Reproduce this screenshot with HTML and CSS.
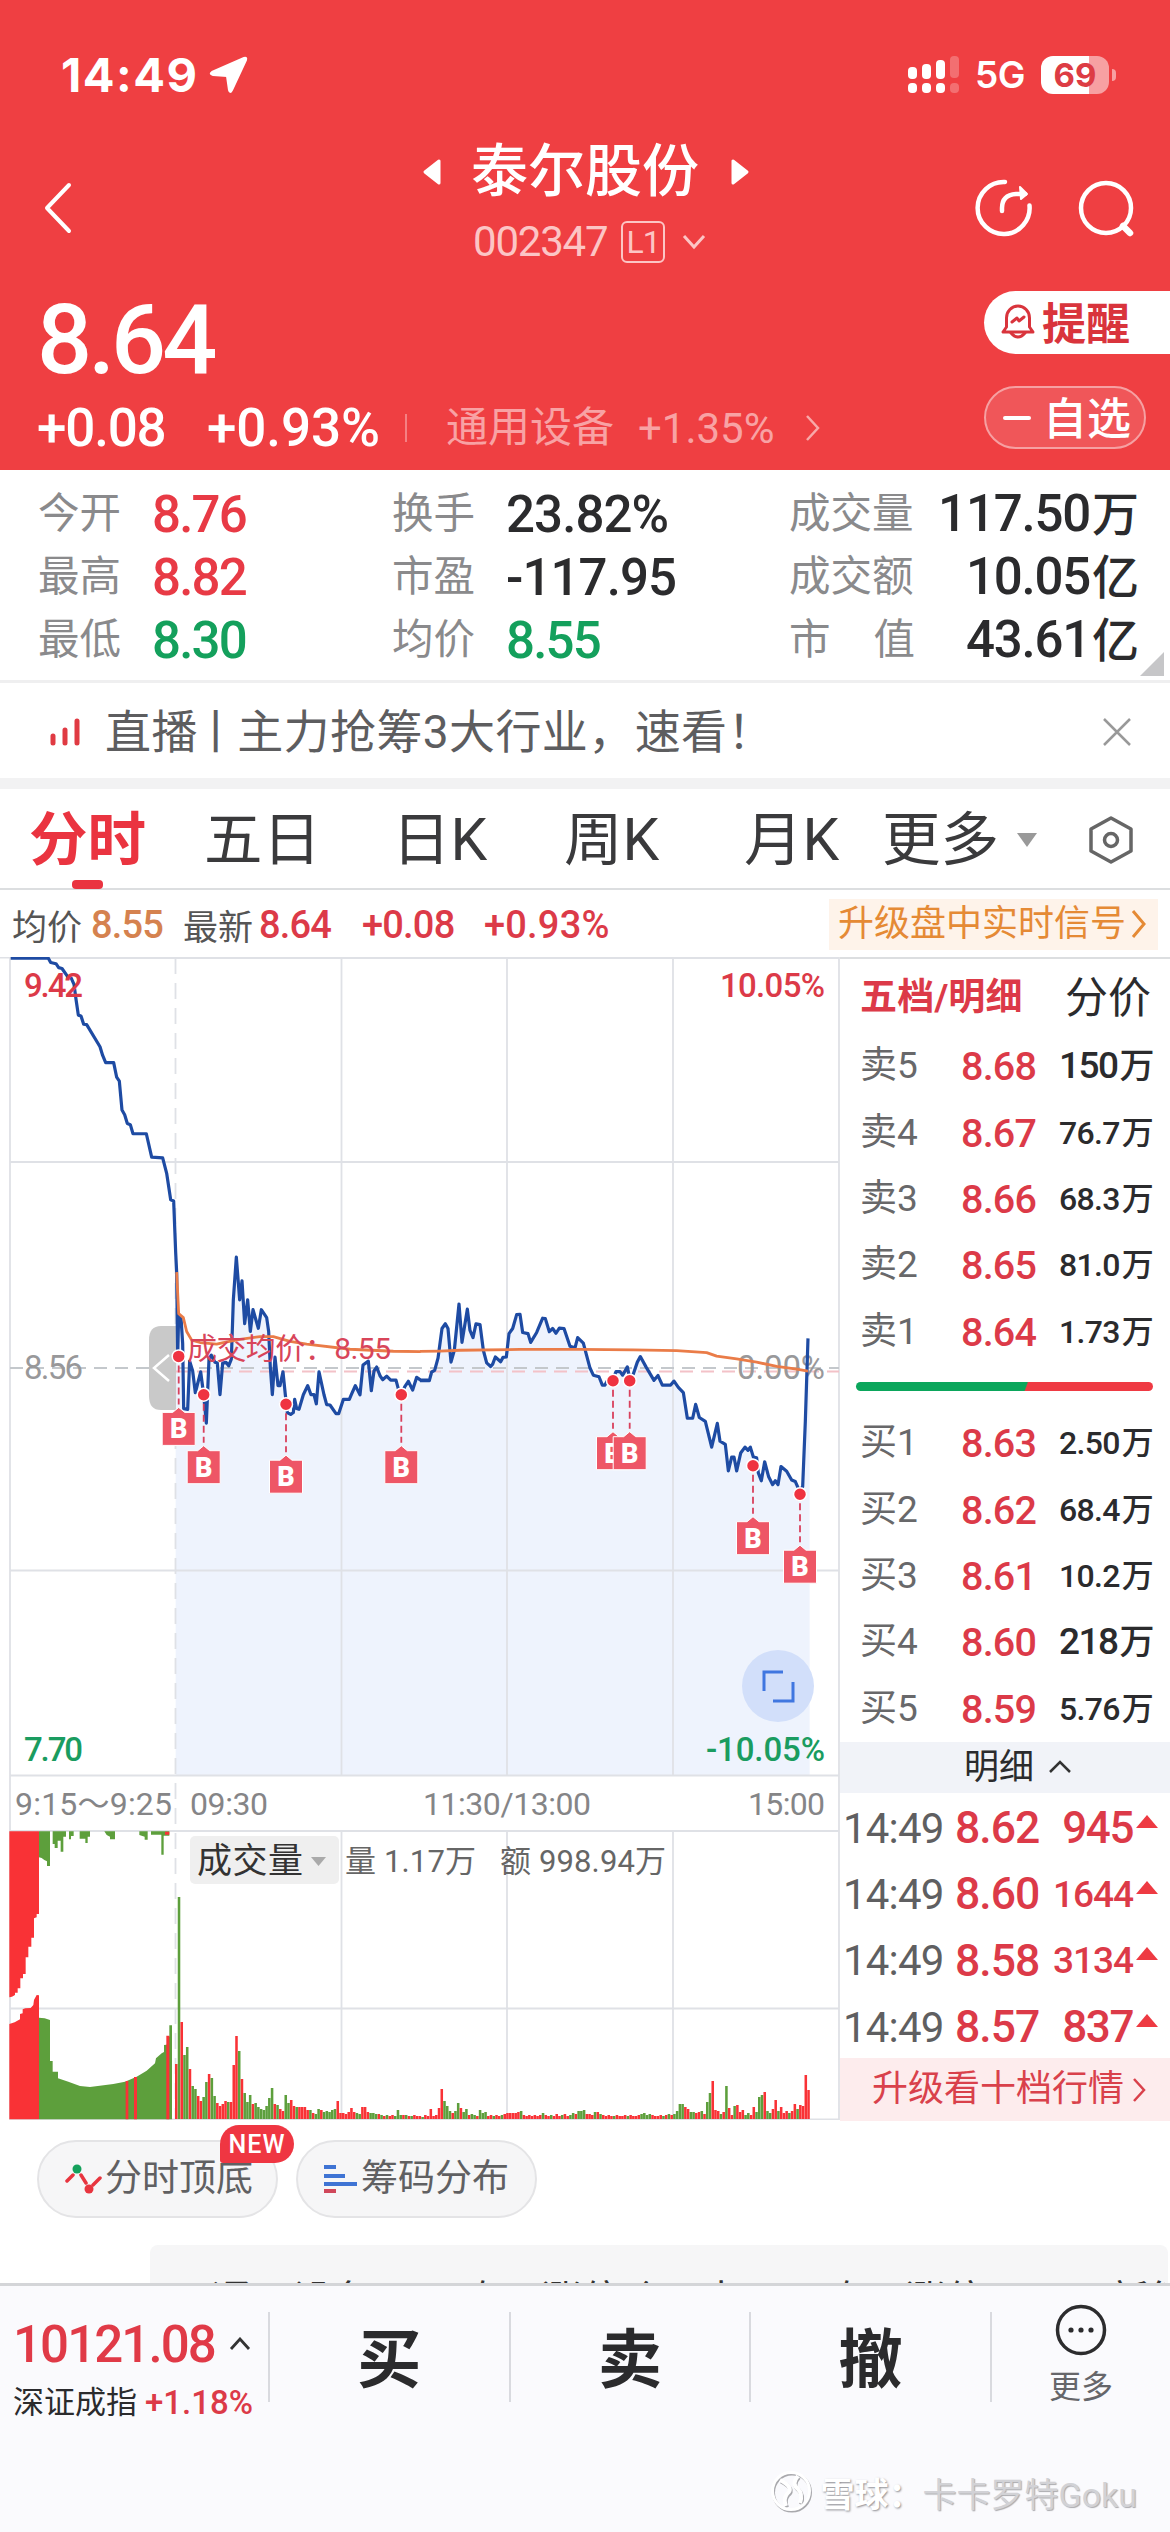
FILE: index.html
```html
<!DOCTYPE html>
<html lang="zh-CN">
<head>
<meta charset="utf-8">
<title>泰尔股份 002347</title>
<link rel="stylesheet" href="styles.css">
</head>
<body>
<main class="app">
  <header class="header">
    <div class="status">
      <span class="status-time">14:49</span>
      <svg class="status-loc" width="40" height="40" viewBox="0 0 40 40"><path d="M36 3 L4 17 Q1 19 5 20 L19 21 L21 35 Q22 39 24 35 L38 5 Q39 2 36 3Z" fill="#fff" stroke="#fff" stroke-width="2" stroke-linejoin="round"/></svg>
      <svg class="status-signal" width="52" height="38" viewBox="0 0 52 38" fill="#fff"><rect y="11" width="9" height="12" rx="4"/><rect x="14" y="8" width="9" height="15" rx="4"/><rect x="28" y="4" width="9" height="19" rx="4"/><rect x="42" y="0" width="9" height="22" rx="4" opacity=".25"/><rect y="27" width="9" height="10" rx="4"/><rect x="14" y="27" width="9" height="10" rx="4"/><rect x="28" y="27" width="9" height="10" rx="4"/><rect x="42" y="27" width="9" height="10" rx="4" opacity=".25"/></svg>
      <span class="status-net">5G</span>
      <span class="battery">69</span>
      <i class="battery-tip"></i>
    </div>
    <div class="titlebar">
      <svg class="back" width="34" height="56" viewBox="0 0 34 56"><path d="M28 5 L6 28 L28 51" fill="none" stroke="#fff" stroke-width="4" stroke-linecap="round" stroke-linejoin="round"/></svg>
      <div class="title">
        <div class="title-name"><svg width="20" height="28" viewBox="0 0 20 28"><path d="M17 3 V25 L3 14Z" fill="#fff" stroke="#fff" stroke-width="3" stroke-linejoin="round"/></svg><h1>泰尔股份</h1><svg width="20" height="28" viewBox="0 0 20 28"><path d="M3 3 V25 L17 14Z" fill="#fff" stroke="#fff" stroke-width="3" stroke-linejoin="round"/></svg></div>
        <div class="title-code"><span>002347</span><b>L1</b><svg width="26" height="18" viewBox="0 0 26 18"><path d="M3 3 L13 14 L23 3" fill="none" stroke="#fcc5c5" stroke-width="3"/></svg></div>
      </div>
      <div class="title-icons">
        <svg width="64" height="64" viewBox="0 0 64 64" fill="none" stroke="#fff" stroke-width="4.500" stroke-linecap="round" stroke-linejoin="round"><path d="M34 6 A26 26 0 1 0 58.500 29.500"/><path d="M31 35 V32 Q31 19 45 18 H54"/><path d="M49 11 L56 18 L50 23Z" fill="#fff" stroke-width="2"/></svg>
        <svg width="64" height="64" viewBox="0 0 64 64" fill="none" stroke="#fff" stroke-width="4.500"><circle cx="32" cy="32" r="25"/><path d="M49 50 L56 57" stroke-width="6.500" stroke-linecap="round"/></svg>
      </div>
    </div>
    <div class="quote">
      <div class="quote-main">
        <div class="price">8.64</div>
        <div class="change"><span class="c1">+0.08</span><span class="c2">+0.93%</span><i></i><span class="c3">通用设备</span><span class="c4">+1.35%</span><svg width="16" height="28" viewBox="0 0 16 28"><path d="M2 2 L13 14 L2 26" fill="none" stroke="#f8a9a9" stroke-width="2.500"/></svg></div>
      </div>
      <div class="actions">
        <button class="alert"><svg width="36" height="40" viewBox="0 0 36 40" fill="none" stroke="#d9343c" stroke-width="3" stroke-linejoin="round" stroke-linecap="round"><path d="M3 31 H33 L29.500 26 V17 A11.500 12 0 0 0 6.500 17 V26Z"/><path d="M11 32 Q18 40 25 32"/><path d="M12 21 L17 17 L19 20 L24 16"/></svg>提醒</button>
        <button class="watch"><i></i>自选</button>
      </div>
    </div>
  </header>

  <section class="stats">
    <div class="stats-row"><span>今开</span><b class="up">8.76</b><span>换手</span><b class="mid">23.82%</b><span>成交量</span><b class="end">117.50<em>万</em></b></div>
    <div class="stats-row"><span>最高</span><b class="up">8.82</b><span>市盈</span><b class="mid">-117.95</b><span>成交额</span><b class="end">10.05<em>亿</em></b></div>
    <div class="stats-row"><span>最低</span><b class="down">8.30</b><span>均价</span><b class="down">8.55</b><span class="spread">市<span>值</span></span><b class="end">43.61<em>亿</em></b></div>
    <i class="stats-corner"></i>
  </section>

  <section class="live">
    <svg width="32" height="30" viewBox="0 0 32 30" stroke="#e03a43" stroke-width="5" stroke-linecap="round"><path d="M3 19 V26 M15 13 V26 M27 4 V26"/></svg>
    <p>直播<span class="bar">丨</span>主力抢筹3大行业，速看！</p>
    <svg width="28" height="28" viewBox="0 0 28 28" stroke="#999" stroke-width="2.500"><path d="M1 1 L27 27 M27 1 L1 27"/></svg>
  </section>

  <nav class="tabs">
    <span class="tab active">分时</span><span class="tab t2">五日</span><span class="tab t3">日K</span><span class="tab t4">周K</span><span class="tab t5">月K</span><span class="tab t6">更多</span><i class="tabs-caret"></i>
    <svg width="46" height="50" viewBox="0 0 46 50" fill="none" stroke="#666" stroke-width="3.500"><path d="M23 3 L43 14 V36 L23 47 L3 36 V14Z" stroke-linejoin="round"/><circle cx="23" cy="25" r="6.500"/></svg>
  </nav>

  <div class="info">
    <span class="i1">均价</span><b class="i2 avg">8.55</b><span class="i3">最新</span><b class="i4">8.64</b><b class="i5">+0.08</b><b class="i6">+0.93%</b>
    <a class="signal">升级盘中实时信号<svg width="18" height="32" viewBox="0 0 18 32"><path d="M3 3 L14 16 L3 29" fill="none" stroke="#e58a35" stroke-width="3"/></svg></a>
  </div>

  <div class="board">
    <svg class="chart" width="840" height="1163" viewBox="0 957 840 1163">
      <g transform="translate(0 940) scale(.33333 .39541)">
        <path class="area" d="M527 2112 V790 L533 1050 536 950 543 955 548 1020 551 1185 563 1187 569 1065 578 1090 586 1145 602 1092 611 1150 619 1222 627 1060 634 1050 645 1068 652 1070 660 1150 668 1070 678 1068 686 1077 694 1060 700 910 709 802 719 910 726 862 734 970 743 910 751 990 759 935 775 982 784 935 800 955 806 990 811 1080 817 1150 825 1055 834 1127 840 1127 849 1092 856 1150 862 1195 872 1200 880 1195 884 1162 890 1185 897 1187 910 1150 923 1127 933 1150 942 1150 949 1173 957 1092 972 1150 980 1175 990 1176 1008 1198 1016 1198 1030 1162 1048 1162 1054 1150 1066 1127 1080 1150 1089 1075 1105 1065 1114 1140 1122 1090 1130 1080 1140 1102 1148 1112 1160 1103 1172 1113 1188 1113 1195 1135 1205 1150 1214 1130 1225 1116 1238 1138 1250 1106 1262 1113 1288 1113 V2112Z"/>
      </g>
      <g transform="translate(420 1200) scale(.33333 .39541)">
        <path class="area" d="M-2 1455 V457 L28 457 35 435 44 431 54 400 66 325 76 313 84 325 93 410 103 380 117 263 126 360 142 276 150 330 159 348 168 313 180 315 190 380 200 412 212 421 218 415 226 397 242 409 249 398 259 397 267 338 278 325 290 290 300 289 308 335 324 338 332 360 350 335 368 299 376 300 388 333 398 325 408 337 418 324 432 325 450 370 465 374 473 348 490 362 510 425 520 443 537 447 547 468 555 468 563 455 578 455 588 434 600 434 608 443 622 422 630 455 640 440 652 410 661 396 678 422 702 456 714 444 727 468 752 468 762 458 775 474 790 487 802 552 818 552 827 517 838 550 856 560 875 625 892 565 900 610 916 618 925 685 935 650 942 650 950 685 962 640 975 625 984 633 991 625 1000 650 1010 652 1015 690 1024 710 1034 662 1046 700 1058 720 1066 710 1074 720 1083 674 1100 686 1115 708 1126 712 1138 735 1148 725 1156 560 1164 350 1169 435 V1455Z"/>
      </g>
      <g class="grid">
        <path d="M10 957 V2120 M839 957 V2120 M0 957.500 H10 M10 958 H839 M10 1162 H839 M10 1570.500 H839 M10 1775.500 H839 M10 1831 H839 M10 2008.500 H839 M10 2119.500 H839 M341.500 958 V1775 M507 958 V1775 M673 958 V1775 M341.500 1831 V2119 M507 1831 V2119 M673 1831 V2119"/>
        <path d="M175.500 958 V2119" stroke-dasharray="16 9"/>
      </g>
      <path d="M10 1368 H839" stroke="#c4c8cc" stroke-width="2" stroke-dasharray="13 8" fill="none"/>
      <path d="M176 1371.500 H839" stroke="#f3c2c8" stroke-width="2" stroke-dasharray="13 8" fill="none"/>
      <text x="24" y="1379" textLength="59" class="lab flat">8.56</text>
      <text x="737" y="1379" textLength="88" class="lab flat">0.00%</text>
      <path d="M176 1326 H161 Q149 1326 149 1340 V1396 Q149 1410 161 1410 H176Z" fill="#c9c9c9"/>
      <path d="M169 1355 L154 1368 L169 1381" fill="none" stroke="#fff" stroke-width="2.500"/>
      <g transform="translate(0 940) scale(.33333 .39541)">
        <path class="line" d="M32 46 H145 L152 57 168 60 176 70 186 72 205 95 214 97 222 112 228 150 235 190 243 192 251 213 260 214 300 270 308 292 317 310 341 310 350 347 358 357 366 430 374 442 382 464 391 467 399 490 439 490 455 549 488 551 500 590 512 657 521 660 527 790 530 840 533 1050 536 950 543 955 548 1020 551 1185 563 1187 569 1065 578 1090 586 1145 602 1092 611 1150 619 1222 627 1060 634 1050 645 1068 652 1070 660 1150 668 1070 678 1068 686 1077 694 1060 700 910 709 802 719 910 726 862 734 970 743 910 751 990 759 935 775 982 784 935 800 955 806 990 811 1080 817 1150 825 1055 834 1127 840 1127 849 1092 856 1150 862 1195 872 1200 880 1195 884 1162 890 1185 897 1187 910 1150 923 1127 933 1150 942 1150 949 1173 957 1092 972 1150 980 1175 990 1176 1008 1198 1016 1198 1030 1162 1048 1162 1054 1150 1066 1127 1080 1150 1089 1075 1105 1065 1114 1140 1122 1090 1130 1080 1140 1102 1148 1112 1160 1103 1172 1113 1188 1113 1195 1135 1205 1150 1214 1130 1225 1116 1238 1138 1250 1106 1262 1113 1285 1113"/>
        <path class="avgline" d="M530 840 L536 945 550 955 560 990 575 1012 600 1018 650 1022 670 1018 720 1010 780 1003 820 1003 870 1015 920 1022 1050 1035 1180 1040 1262 1041"/>
      </g>
      <g transform="translate(420 1200) scale(.33333 .39541)">
        <path class="line" d="M0 457 H28 L35 435 44 431 54 400 66 325 76 313 84 325 93 410 103 380 117 263 126 360 142 276 150 330 159 348 168 313 180 315 190 380 200 412 212 421 218 415 226 397 242 409 249 398 259 397 267 338 278 325 290 290 300 289 308 335 324 338 332 360 350 335 368 299 376 300 388 333 398 325 408 337 418 324 432 325 450 370 465 374 473 348 490 362 510 425 520 443 537 447 547 468 555 468 563 455 578 455 588 434 600 434 608 443 622 422 630 455 640 440 652 410 661 396 678 422 702 456 714 444 727 468 752 468 762 458 775 474 790 487 802 552 818 552 827 517 838 550 856 560 875 625 892 565 900 610 916 618 925 685 935 650 942 650 950 685 962 640 975 625 984 633 991 625 1000 650 1010 652 1015 690 1024 710 1034 662 1046 700 1058 720 1066 710 1074 720 1083 674 1100 686 1115 708 1126 712 1138 735 1148 725 1156 560 1164 350"/>
        <path class="avgline" d="M0 383 L60 382 120 380 300 378 480 378 640 379 770 381 860 386 890 395 950 402 1010 410 1070 421 1130 428 1164 433"/>
      </g>
      <text x="24" y="996.500" textLength="59" class="lab rise">9.42</text>
      <text x="720" y="996.500" textLength="105" class="lab rise">10.05%</text>
      <text x="24" y="1761" textLength="59" class="lab fall">7.70</text>
      <text x="706" y="1761" textLength="119" class="lab fall">-10.05%</text>
      <text x="187" y="1359" textLength="204" class="lab cost">成交均价：8.55</text>
      <g id="markers"></g>
      <circle cx="778" cy="1686" r="36" fill="#d2dffa"/>
      <path d="M764 1691 V1672 H783 M773 1701 H793 V1682" fill="none" stroke="#4077e0" stroke-width="3"/>
      <text x="15" y="1815" textLength="157" class="lab time">9:15～9:25</text>
      <text x="190" y="1815" textLength="78" class="lab time">09:30</text>
      <text x="423" y="1815" textLength="168" class="lab time">11:30/13:00</text>
      <text x="748" y="1815" textLength="77" class="lab time">15:00</text>
      <g transform="translate(0 1770) scale(.33333)">
        <path class="vr" d="M28 184 V682 L36 680 45 675 45 668 53 668 53 655 61 655 61 625 69 625 69 612 77 612 77 562 85 562 85 530 94 530 94 503 102 503 102 445 110 442 110 432 117 432 117 184Z"/>
        <path class="vg" d="M117 184 V262 L125 264 133 270 141 274 141 288 150 288 150 184Z M158 184 V222 H164 V234 H173 V212 H182 V245 H190 V200 H198 V184Z M207 184 V208 H213 V198 H221 V184Z M239 184 V206 H256 V219 H263 V200 H270 V184Z M313 184 L320 195 330 200 330 208 345 208 345 184Z M418 184 V195 L434 200 434 209 443 209 443 184Z M453 184 V194 H484 V254 H491 V197 H508 V184Z"/>
        <path class="vr" d="M28 1048 V762 L44 757 60 748 60 732 68 730 68 718 76 715 92 714 100 705 102 690 110 675 117 676 V1048Z M495 185 H508 V194 H495Z"/>
        <path class="vg" d="M117 1048 V743 L134 745 150 750 150 873 158 873 158 905 174 905 174 925 205 935 240 948 270 951 340 942 375 935 410 920 440 902 465 880 468 865 485 850 492 846 492 825 500 824 508 798 508 766 516 766 516 1048Z"/>
        <path class="vr" d="M377 1048 V933 H385 V1048Z M402 1048 V921 H411 V1048Z M499 1048 V797 H508 V1048Z"/>
      </g>
      <g id="volume"></g>
      <rect x="190" y="1836" width="149" height="48" rx="5" fill="#efefef"/>
      <text x="197" y="1873" textLength="106" class="vname">成交量</text>
      <path d="M311 1857 H326 L318.500 1866Z" fill="#aaa"/>
      <text x="345" y="1872" textLength="131" class="lab vtext">量 1.17万</text>
      <text x="500" y="1872" textLength="166" class="lab vtext">额 998.94万</text>
    </svg>

    <aside class="book">
      <div class="book-tabs"><b>五档/明细</b><span>分价</span></div>
      <div class="level"><span>卖5</span><b>8.68</b><em class="big">150<u>万</u></em></div>
      <div class="level"><span>卖4</span><b>8.67</b><em>76.7<u>万</u></em></div>
      <div class="level"><span>卖3</span><b>8.66</b><em>68.3<u>万</u></em></div>
      <div class="level"><span>卖2</span><b>8.65</b><em>81.0<u>万</u></em></div>
      <div class="level"><span>卖1</span><b>8.64</b><em>1.73<u>万</u></em></div>
      <div class="ratio"></div>
      <div class="level"><span>买1</span><b>8.63</b><em>2.50<u>万</u></em></div>
      <div class="level"><span>买2</span><b>8.62</b><em>68.4<u>万</u></em></div>
      <div class="level"><span>买3</span><b>8.61</b><em>10.2<u>万</u></em></div>
      <div class="level"><span>买4</span><b>8.60</b><em class="big">218<u>万</u></em></div>
      <div class="level"><span>买5</span><b>8.59</b><em>5.76<u>万</u></em></div>
      <div class="detail"><span>明细</span><svg width="24" height="14" viewBox="0 0 24 14"><path d="M2 12 L12 2 L22 12" fill="none" stroke="#333" stroke-width="2.500"/></svg></div>
      <div class="trade"><span>14:49</span><b>8.62</b><em class="big">945</em><i></i></div>
      <div class="trade"><span>14:49</span><b>8.60</b><em>1644</em><i></i></div>
      <div class="trade"><span>14:49</span><b>8.58</b><em>3134</em><i></i></div>
      <div class="trade"><span>14:49</span><b>8.57</b><em class="big">837</em><i></i></div>
      <a class="upgrade"><span>升级看十档行情</span><svg width="15" height="24" viewBox="0 0 15 24"><path d="M2 1 L12 12 L2 23" fill="none" stroke="#d9414b" stroke-width="2.500"/></svg></a>
    </aside>
  </div>

  <section class="chips">
    <div class="chip"><svg width="37" height="32" viewBox="0 0 37 32" stroke="#e8353f" stroke-width="3.500" stroke-linecap="round"><path d="M2 18 L8 12 M16 12 L21 20 M28 22 L35 15" /><circle cx="12" cy="6" r="4.500" fill="#14a15c" stroke="none"/><circle cx="24" cy="26" r="4.500" fill="#e8353f" stroke="none"/></svg><span>分时顶底</span><span class="new">NEW</span></div>
    <div class="chip"><svg width="34" height="30" viewBox="0 0 34 30" stroke-width="4"><path d="M0 3 H12 M0 12 H21 M0 20 H33" stroke="#3f74d4"/><path d="M0 27 H12" stroke="#d0475a"/></svg><span>筹码分布</span></div>
  </section>

  <section class="tags"><div class="tags-card"><span class="g1">通用设备</span><span class="g2">昨日涨停</span><span class="g3">个</span><span class="g4">中</span><span class="g5">昨日涨停</span><span class="g6">新能</span></div></section>

  <footer class="bottom">
    <div class="bottom-row">
      <div class="index">
        <div class="index-val">10121.08<svg width="24" height="14" viewBox="0 0 24 14"><path d="M3 12 L12 2 L21 12" fill="none" stroke="#333" stroke-width="2.800"/></svg></div>
        <div class="index-name">深证成指<b>+1.18%</b></div>
      </div>
      <div class="act">买</div><div class="act">卖</div><div class="act">撤</div>
      <div class="more"><svg width="52" height="52" viewBox="0 0 52 52"><circle cx="26" cy="26" r="23.500" fill="none" stroke="#2c2c2e" stroke-width="3.500"/><g fill="#2c2c2e"><circle cx="16" cy="26" r="2.600"/><circle cx="26" cy="26" r="2.600"/><circle cx="36" cy="26" r="2.600"/></g></svg><span>更多</span></div>
    </div>
    <div class="mark"><svg width="44" height="44" viewBox="0 0 44 44" fill="none"><g stroke="#a9a9ad" transform="translate(1 1.500)"><circle cx="21" cy="21" r="18.500" stroke-width="3"/><path d="M10 10 Q25 18 17 24 Q13 29 16 36 M28 6 Q21 14 28 19 Q33 24 30 33" stroke-width="4"/></g><g stroke="#fff"><circle cx="21" cy="21" r="18.500" stroke-width="3"/><path d="M10 10 Q25 18 17 24 Q13 29 16 36 M28 6 Q21 14 28 19 Q33 24 30 33" stroke-width="4"/></g></svg><b>雪球：</b><span>卡卡罗特Goku</span></div>
  </footer>
</main>
<script src="chart.js"></script>
</body>
</html>
```
FILE: styles.css
```css
* { box-sizing: border-box; }
body { margin: 0; background: #fff; font-family: Roboto, "Noto Sans CJK SC", sans-serif; color: #2b2b2d; }
.app { width: 1170px; height: 2532px; display: flex; flex-direction: column; overflow: hidden; }
.app > * { flex: none; }
svg { display: block; flex: none; }
b, em, u, h1, i { font-style: normal; font-weight: 500; text-decoration: none; margin: 0; }
button { border: 0; padding: 0; font-family: inherit; }
span, b, em, p, h1 { white-space: nowrap; }

.header { height: 470px; background: #ef3f42; color: #fff; }
.status { height: 134px; padding: 15px 54px 0 61px; display: flex; align-items: center; font-family: Inter, sans-serif; font-weight: 600; }
.status-time { font-size: 47px; font-weight: 700; letter-spacing: 1.5px; width: 146px; }
.status-loc { margin-left: 1px; }
.status-signal { margin-left: auto; }
.status-net { font-size: 37px; margin-left: 15px; width: 51px; letter-spacing: -0.5px; }
.battery { margin-left: 15px; width: 68px; height: 38px; border-radius: 12px; background: linear-gradient(90deg, #fff 70%, #f7a0a2 70%); color: #dd3c44; font-size: 33px; font-weight: 700; line-height: 38px; text-align: center; }
.battery-tip { width: 4px; height: 12px; margin-left: 3px; border-radius: 0 6px 6px 0; background: #f7a0a2; }
.titlebar { height: 148px; display: grid; grid-template-columns: 300px 1fr 300px; align-items: center; }
.back { margin-left: 41px; }
.title-name { height: 74px; padding-top: 1px; display: flex; justify-content: center; align-items: center; gap: 30px; }
.title-name svg { position: relative; left: 1px; }
h1 { font-size: 57px; line-height: 74px; }
.title-code { height: 74px; padding: 0 0 7px 173px; display: flex; align-items: center; color: #fcc5c5; }
.title-code span { font-size: 42px; width: 148px; letter-spacing: -1.2px; }
.title-code b { width: 44px; height: 42px; border: 2px solid #fcc5c5; border-radius: 6px; font-size: 32px; line-height: 38px; text-align: center; font-weight: 400; letter-spacing: -1px; }
.title-code svg { margin-left: 16px; }
.title-icons { display: flex; gap: 39px; padding-left: 101px; }
.quote { height: 188px; display: flex; justify-content: space-between; }
.quote-main { padding-left: 37px; }
.price { height: 113px; line-height: 117px; font-size: 97px; font-weight: 500; letter-spacing: -4px; }
.change { height: 66px; display: flex; align-items: center; font-size: 53px; font-weight: 500; letter-spacing: -1.2px; }
.c1 { width: 170px; }
.c2 { width: 198px; letter-spacing: -0.1px; }
.change i { width: 2px; height: 28px; background: #f58083; margin-right: 39px; }
.change .c3 { font-size: 42px; font-weight: 400; letter-spacing: 0; color: #f8a2a4; width: 192px; line-height: 60px; margin-top: -1px; }
.change .c4 { font-size: 42px; font-weight: 400; letter-spacing: 0; color: #f8a2a4; width: 167px; }
.actions { width: 186px; padding-top: 9px; }
.alert { width: 186px; height: 63px; border-radius: 32px 0 0 32px; background: #fff; color: #d9343c; display: flex; align-items: center; font-size: 44px; font-weight: 700; padding: 0 0 3px 16px; gap: 6px; }
.watch { width: 162px; height: 63px; margin-top: 32px; border-radius: 32px; border: 2px solid #f6a0a2; background: #f05659; color: #fff; display: flex; align-items: center; font-size: 44px; font-weight: 500; padding: 0 0 3px 17px; gap: 12px; }
.watch i { width: 28px; height: 4px; background: #fff; border-radius: 2px; margin-top: 3px; }

.stats { height: 213px; padding: 12px 31px 0 38px; border-bottom: 3px solid #efeff0; position: relative; }
.stats-row { height: 63px; display: grid; grid-template-columns: 114px 240px 114px 283px 124px 1fr; align-items: center; }
.stats-row > span { font-size: 41.5px; color: #8a8a8c; line-height: 60px; }
.stats-row > b { font-size: 51px; line-height: 63px; letter-spacing: -1.8px; }
.stats-row > .mid { letter-spacing: -0.9px; }
.stats-row > .end { letter-spacing: -1.2px; }
.stats-row em { font-size: 47px; letter-spacing: 0; margin-left: 2px; }
.spread { display: flex; gap: 43px; }
.end { text-align: right; }
.up { color: #e83a45; }
.down { color: #14a05c; }
.stats-corner { position: absolute; right: 6px; bottom: 4px; border-left: 24px solid transparent; border-bottom: 24px solid #c6c6c8; }

.live { height: 95px; display: flex; align-items: center; padding: 2px 39px 0 50px; }
.live p { margin: 0 auto 0 23px; font-size: 46px; color: #5d5d5f; line-height: 90px; letter-spacing: 0.4px; }
.live .bar { margin: 0 -2px 0 -5px; }
.tabs { height: 112px; border-top: 11px solid #f2f2f3; border-bottom: 2px solid #dcdee0; display: flex; align-items: center; padding: 2px 0 0 29px; }
.tab { font-size: 58.5px; color: #3a3a3c; line-height: 96px; }
.active { color: #ea3440; font-weight: 700; position: relative; width: 175px; }
.active::after { content: ""; position: absolute; left: 43px; bottom: -1px; width: 31px; height: 9px; border-radius: 4px; background: #ea3440; }
.t2 { width: 188px; }
.t3 { width: 172px; }
.t4 { width: 180px; }
.t5 { width: 138px; }
.t6 { width: 135px; }
.tabs-caret { border: 10px solid transparent; border-top: 14px solid #999; border-bottom: 0; margin-right: 51px; }

.info { height: 67px; display: flex; align-items: center; padding: 1px 12px 0 12px; color: #555; font-size: 35px; }
.info b { font-size: 38px; letter-spacing: -0.8px; color: #dc3a48; padding-top: 1px; }
.i1 { width: 79px; }
.i2 { width: 92px; }
.i3 { width: 76px; }
.i4 { width: 103px; }
.i5 { width: 122px; }
.info .i6 { letter-spacing: 0.2px; }
.info .avg { color: #d5824f; }
.signal { margin-left: auto; width: 329px; height: 51px; padding-left: 9px; background: #fef3ea; color: #e58a35; font-size: 36px; line-height: 51px; display: flex; align-items: center; gap: 4px; }

.board { height: 1164px; display: flex; }
.lab { font-size: 33px; fill: #7b7b7d; }
.flat { fill: #98989a; }
.rise { fill: #dc3a48; font-weight: 500; }
.fall { fill: #1a9c60; font-weight: 500; }
.cost { fill: #d8455a; font-size: 30px; }
.time { font-size: 32px; fill: #858587; }
.vname { font-size: 35px; fill: #333; }
.vtext { font-size: 31px; fill: #666; }
.area { fill: #eef3fd; }
.grid { fill: none; stroke: #dfe1e6; stroke-width: 1.8; }
.line, .avgline { fill: none; stroke: #1e4ba3; stroke-width: 3.2; vector-effect: non-scaling-stroke; stroke-linejoin: round; }
.avgline { stroke: #ea7c48; stroke-width: 2.8; }
.vr { fill: #f93236; }
.vg { fill: #5d9f3c; }
.flag { fill: #ee5666; }
.flag-text { font-size: 27px; font-weight: 900; fill: #fff; text-anchor: middle; }

.book { width: 330px; border-top: 2px solid #dcdee0; color: #2b2b2d; }
.book-tabs { height: 74px; padding: 0 19px 4px 20px; display: flex; justify-content: space-between; align-items: center; }
.book-tabs b { font-size: 37px; font-weight: 700; color: #dc3a48; letter-spacing: 0.2px; }
.book-tabs span { font-size: 43px; }
.level { height: 66.4px; padding: 0 17px 0 20px; display: flex; align-items: center; }
.level span { width: 101px; font-size: 37px; color: #68686a; line-height: 60px; }
.level b { font-size: 39.5px; letter-spacing: -0.8px; color: #dc3a48; margin-top: 1px; }
.level em { margin-left: auto; font-size: 32px; letter-spacing: -0.7px; line-height: 60px; }
.level em.big { font-size: 37px; letter-spacing: -1.5px; }
.level u { font-size: 32px; margin-left: 2px; font-weight: 500; }
.level .big u { font-size: 35px; }
.ratio { height: 9px; margin: 17px 17px 19px 16px; border-radius: 5px; background: linear-gradient(110deg, #0ba65c 57%, #ef3a43 57.5%); }
.detail { height: 51px; background: #f1f3f8; display: flex; align-items: center; justify-content: center; gap: 14px; font-size: 35px; padding-left: 26px; margin-bottom: 1px; }
.detail span { line-height: 51px; }
.trade { height: 66.4px; padding: 2px 12px 0 3px; display: flex; align-items: center; }
.trade span { width: 112px; font-size: 42px; color: #5f5f61; letter-spacing: -0.8px; }
.trade b { font-size: 44.5px; letter-spacing: -1px; color: #dc3a48; }
.trade em { margin-left: auto; font-size: 37px; letter-spacing: -1px; color: #dc3a48; }
.trade em.big { font-size: 44px; letter-spacing: -1.4px; }
.trade i { border: 11px solid transparent; border-bottom: 13px solid #ee3a42; border-top: 0; margin: -14px 0 0 3px; }
.upgrade { height: 63px; margin-top: -1px; background: #fdeced; color: #d9414b; font-size: 36px; display: flex; align-items: center; justify-content: center; gap: 8px; padding: 0 0 0 9px; }
.upgrade span { line-height: 60px; margin-top: -1px; }

.chips { height: 124px; padding: 19px 0 0 37px; display: flex; gap: 18px; }
.chip { position: relative; width: 241px; height: 78px; border: 2px solid #e4e4e6; border-radius: 39px; background: #f6f6f7; display: flex; align-items: center; padding-left: 26px; font-size: 37px; color: #606062; gap: 4px; }
.chip svg { margin-right: -1px; }
.chip > span:not(.new) { line-height: 70px; }
.new { position: absolute; left: 181px; top: -17px; width: 74px; height: 38px; border-radius: 19px 19px 19px 3px; background: #ef3642; color: #fff; font: 500 25px/39px Roboto, sans-serif; text-align: center; letter-spacing: 1px; }
.tags { height: 38px; overflow: hidden; padding-left: 150px; }
.tags-card { width: 1018px; height: 88px; padding: 27px 0 0 61px; border-radius: 8px; background: #f6f6f7; display: flex; font-size: 40.5px; line-height: 58px; color: #333; }
.tags-card span { flex: none; }
.g1 { width: 249px; }
.g2 { width: 165px; }
.g3 { width: 76px; }
.g4 { width: 123px; }
.g5 { width: 285px; }

.bottom { flex: 1; background: #fafafd; border-top: 3px solid #d4d5d8; display: flex; flex-direction: column; }
.bottom-row { height: 172px; display: flex; padding: 26px 0 0 0; }
.index { width: 268px; padding: 0 0 0 13px; }
.index-val { height: 64px; display: flex; align-items: center; gap: 13px; font-size: 51px; font-weight: 500; color: #e03a47; letter-spacing: -1.9px; }
.index-name { height: 54px; display: flex; align-items: center; gap: 8px; font-size: 31px; line-height: 54px; }
.index-name b { font-size: 33px; color: #dc3a48; letter-spacing: 0; }
.act { width: 240.6px; height: 90px; border-left: 2px solid #d9dadf; font-size: 64px; font-weight: 700; line-height: 98px; text-align: center; }
.more { flex: 1; height: 90px; border-left: 2px solid #d9dadf; display: flex; flex-direction: column; align-items: center; font-size: 32px; line-height: 40px; color: #66666a; gap: 11px; }
.more svg { margin-top: -8px; }
.mark { display: flex; align-items: center; justify-content: flex-end; padding-right: 33px; height: 68px; font-size: 34px; color: #d2d2d6; text-shadow: 1px 1px 1px #aaaaae; }
.mark b { font-weight: 700; color: #fff; margin-left: 6px; text-shadow: 1px 1px 2px #8f8f94; }
```
FILE: chart.js
```js
const NS = "http://www.w3.org/2000/svg";

function add(parent, tag, attrs, text) {
  const node = document.createElementNS(NS, tag);
  for (const key in attrs) node.setAttribute(key, attrs[key]);
  if (text) node.textContent = text;
  parent.appendChild(node);
}

// Buy markers: dot on the price line, dashed stem, flag below
const buys = [[178.7, 1356.4], [203.7, 1394.7], [286, 1404.2], [401.3, 1394.7], [613, 1380.7], [629.7, 1380.7], [753, 1465.7], [800, 1494.2]];
const markers = document.getElementById("markers");
for (const [x, y] of buys) {
  add(markers, "path", { d: `M${x} ${y + 9} V${y + 48}`, stroke: "#d9405c", "stroke-width": 1.8, "stroke-dasharray": "7 4" });
  add(markers, "circle", { cx: x, cy: y, r: 6.5, fill: "#ef3340", stroke: "#fff", "stroke-width": 1.5 });
  add(markers, "path", { d: `M${x - 16.5} ${y + 56} H${x - 6} L${x} ${y + 51} L${x + 6} ${y + 56} H${x + 16.5} V${y + 89} H${x - 16.5}Z`, class: "flag", stroke: "#fff", "stroke-width": 1 });
  add(markers, "text", { x, y: y + 82, class: "flag-text" }, "B");
}

// One entry per minute: height and direction (r up, g down)
const minutes = ("55r 222g 97r 64g 72g 50r 33g 30g 23r 18r 22g 37g 45r 41g 23g 16r 13r 15r 18r 17g 17r 54r 83r 68g 40r 26g 17g 24g 15r 16g 12g 10g 9g 13g 21g 31g 15r 14g 10r 8r 24g 16g 19r 13r 12g 12r 12r 12r 9r 9g 6r 5g 10g 9r 7g 8g 7g 9g 10g 18r " +
  "6r 6r 5r 7r 11r 7r 6g 5g 12r 12r 7r 6g 6g 5g 5r 4g 3r 4g 3r 4r 3g 9g 4g 4r 4g 3r 3g 4r 3r 3r 2g 4r 3r 10r 3r 4r 11r 30r 18g 13g 8g 6r 8g 16g 11r 7g 10g 4r 5g 4g 3r 9g 6g 7g 3r 4r 3g 4r 3r 4g " +
  "5r 6r 6r 6r 6r 7r 8g 4r 3r 4r 3r 4r 3r 4r 6g 4r 3r 4g 3r 5r 3r 4g 5r 3r 4g 6g 5r 8g 8g 9g 5r 5r 4r 7g 7r 5g 4r 3r 4r 3r 3g 4r 3r 3r 4r 3g 4r 3r 3r 4r 5g 6g 4g 5g 4r 3r 3r 4r 3g 4r 5g 4r 5g 8g 15g 15g 12r 10r 7g 7g 6r 7r 8g 5r " +
  "17g 26g 38r 9r 8r 5g 7r 33g 11r 4r 13g 14r 7r 9r 4g 6g 4r 12r 7g 22g 24g 27r 8g 6g 10r 19r 8g 12r 6r 8r 6g 8r 15r 10g 14r 13r 44r 29r").split(" ");
const volume = document.getElementById("volume");
const step = 635 / minutes.length;
minutes.forEach((entry, i) => {
  const height = parseFloat(entry);
  add(volume, "rect", { x: (175 + i * step).toFixed(2), y: 2119 - height, width: (step - 0.2).toFixed(2), height, class: "v" + entry.slice(-1) });
});
```
